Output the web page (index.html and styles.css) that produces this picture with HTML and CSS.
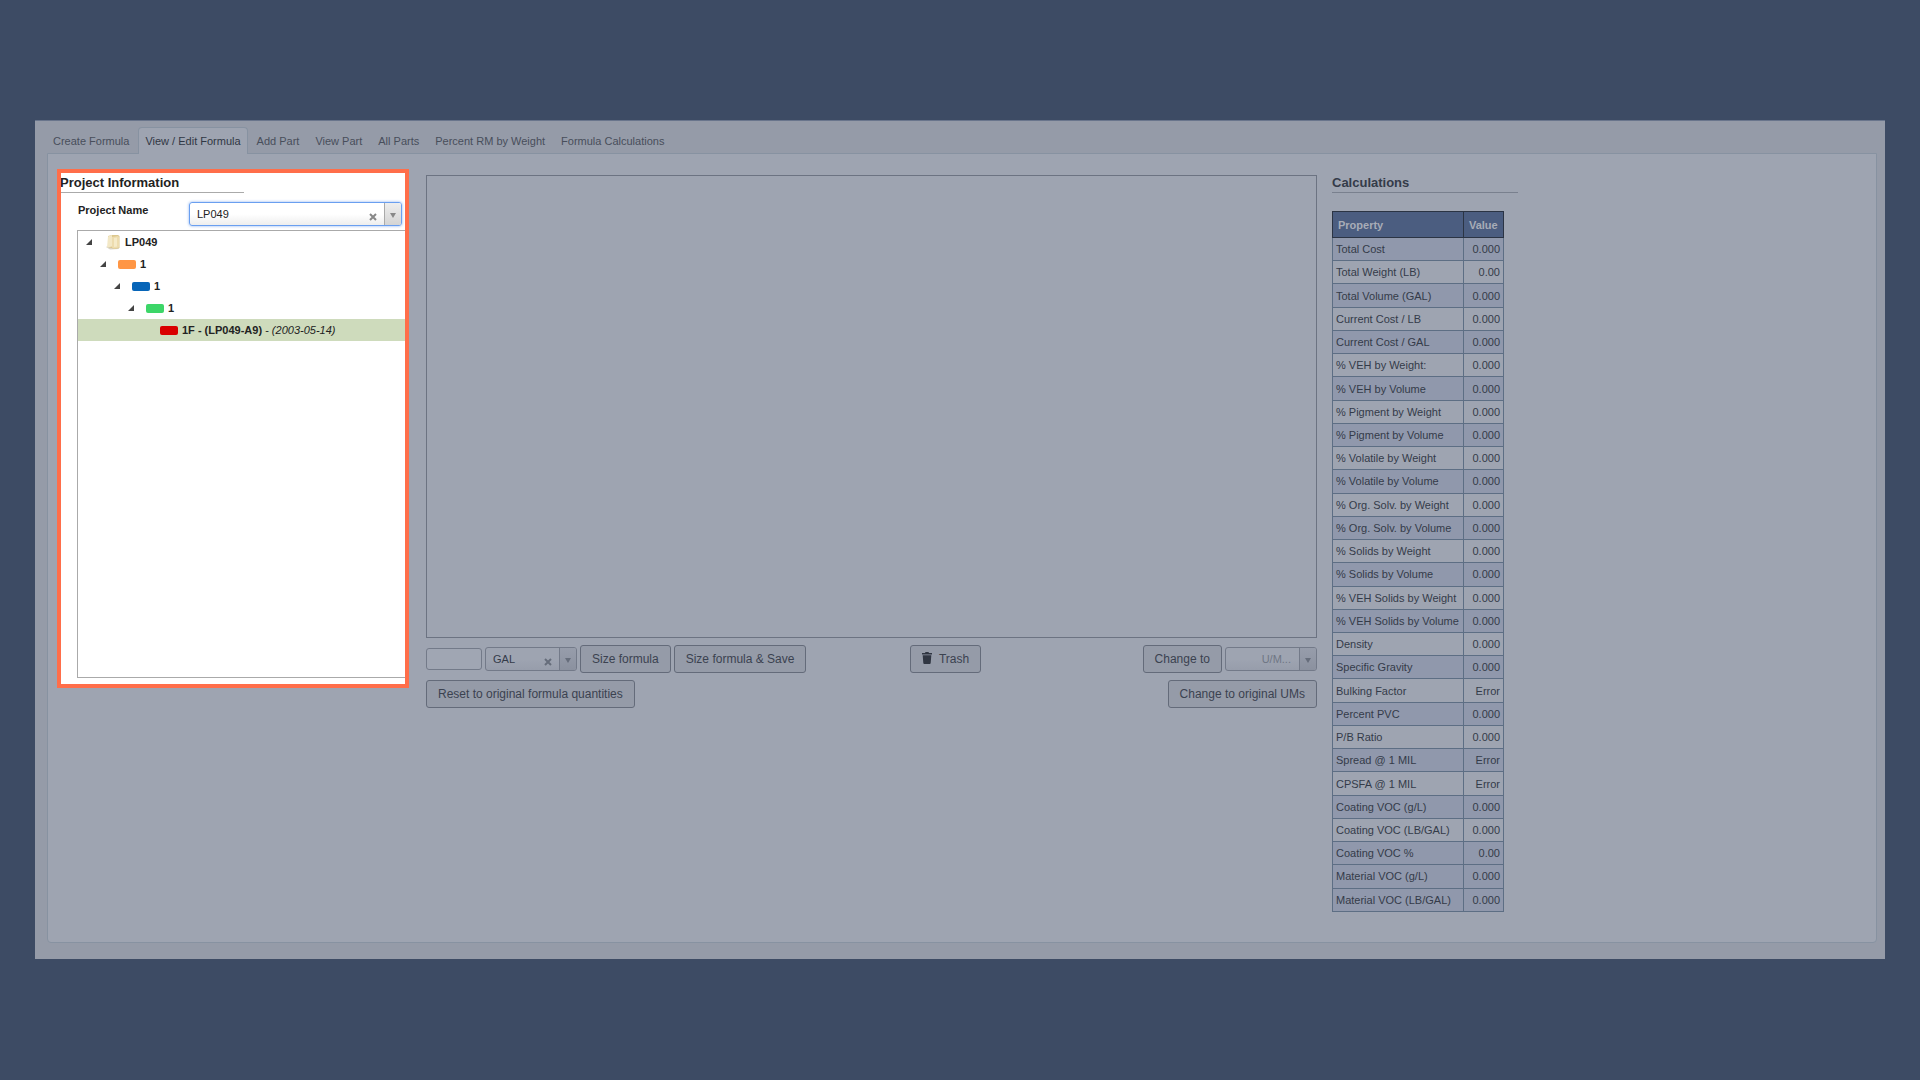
FILE: index.html
```html
<!DOCTYPE html>
<html lang="en">
<head>
    <meta charset="UTF-8">
    <meta name="viewport" content="width=device-width, initial-scale=1.0">
    <title>View / Edit Formula</title>
    <link rel="stylesheet" href="styles.css">
</head>
<body>
    <div class="window">
        <nav class="tabs">
            <a href="#create">Create Formula</a>
            <a href="#edit" class="active">View / Edit Formula</a>
            <a href="#add-part">Add Part</a>
            <a href="#view-part">View Part</a>
            <a href="#all-parts">All Parts</a>
            <a href="#percent">Percent RM by Weight</a>
            <a href="#calc">Formula Calculations</a>
        </nav>

        <main class="panel">
            <section class="project">
                <h2>Project Information</h2>
                <div class="project-row">
                    <label for="projectName">Project Name</label>
                    <div class="combo focused">
                        <select id="projectName"><option>LP049</option></select>
                        <button class="clear" aria-label="Clear project"><svg viewBox="0 0 8 8"><path d="M1 1l6 6M7 1L1 7"/></svg></button>
                        <span class="drop"></span>
                    </div>
                </div>
                <ul class="tree">
                    <li class="level-0">
                        <button class="toggle" aria-label="Collapse"></button>
                        <svg class="folder" viewBox="0 0 16 16">
                            <path d="M1 13l2-1 10 1 1 2-9 .5z" fill="#d9d4c6"/>
                            <path d="M3 2l4-1h6l1.500 1v12l-5 1L3 13z" fill="#dcc78d"/>
                            <path d="M3 2.500L7 1v11.500l-5 1z" fill="#f3e8c6"/>
                            <path d="M7 3l6-1 1 1v10.500l-5 1-2-1z" fill="#eddcae"/>
                            <path d="M9 4l3-.5v9L9 13z" fill="#f5eac8"/>
                        </svg>
                        <b>LP049</b>
                    </li>
                    <li class="level-1">
                        <button class="toggle" aria-label="Collapse"></button>
                        <span class="chip orange"></span><b>1</b>
                    </li>
                    <li class="level-2">
                        <button class="toggle" aria-label="Collapse"></button>
                        <span class="chip blue"></span><b>1</b>
                    </li>
                    <li class="level-3">
                        <button class="toggle" aria-label="Collapse"></button>
                        <span class="chip green"></span><b>1</b>
                    </li>
                    <li class="level-4 selected">
                        <span class="chip red"></span><span><b>1F - (LP049-A9)</b> - <i>(2003-05-14)</i></span>
                    </li>
                </ul>
            </section>

            <section class="formula">
                <div class="formula-grid"></div>
                <div class="toolbar">
                    <div class="group">
                        <input class="size" type="text" aria-label="Formula size">
                        <div class="combo unit">
                            <select aria-label="Size unit"><option>GAL</option></select>
                            <button class="clear" aria-label="Clear unit"><svg viewBox="0 0 8 8"><path d="M1 1l6 6M7 1L1 7"/></svg></button>
                            <span class="drop"></span>
                        </div>
                        <button class="btn">Size formula</button>
                        <button class="btn">Size formula &amp; Save</button>
                    </div>
                    <button class="btn btn-trash">
                        <svg class="trash" viewBox="0 0 10 12"><path d="M0 1h3l.5-1h3L7 1h3v1.500H0zM.7 3.300h8.600L8.700 11q-.1 1-1 1H2.300q-.9 0-1-1z"/></svg>Trash
                    </button>
                    <div class="group">
                        <button class="btn">Change to</button>
                        <div class="combo unit empty">
                            <select aria-label="Unit of measure"><option>U/M...</option></select>
                            <span class="drop"></span>
                        </div>
                    </div>
                </div>
                <div class="toolbar">
                    <button class="btn">Reset to original formula quantities</button>
                    <button class="btn">Change to original UMs</button>
                </div>
            </section>

            <section class="calculations">
                <h2>Calculations</h2>
                <table>
                    <thead>
                        <tr><th>Property</th><th>Value</th></tr>
                    </thead>
                    <tbody>
                        <tr><td>Total Cost</td><td>0.000</td></tr>
                        <tr><td>Total Weight (LB)</td><td>0.00</td></tr>
                        <tr><td>Total Volume (GAL)</td><td>0.000</td></tr>
                        <tr><td>Current Cost / LB</td><td>0.000</td></tr>
                        <tr><td>Current Cost / GAL</td><td>0.000</td></tr>
                        <tr><td>% VEH by Weight:</td><td>0.000</td></tr>
                        <tr><td>% VEH by Volume</td><td>0.000</td></tr>
                        <tr><td>% Pigment by Weight</td><td>0.000</td></tr>
                        <tr><td>% Pigment by Volume</td><td>0.000</td></tr>
                        <tr><td>% Volatile by Weight</td><td>0.000</td></tr>
                        <tr><td>% Volatile by Volume</td><td>0.000</td></tr>
                        <tr><td>% Org. Solv. by Weight</td><td>0.000</td></tr>
                        <tr><td>% Org. Solv. by Volume</td><td>0.000</td></tr>
                        <tr><td>% Solids by Weight</td><td>0.000</td></tr>
                        <tr><td>% Solids by Volume</td><td>0.000</td></tr>
                        <tr><td>% VEH Solids by Weight</td><td>0.000</td></tr>
                        <tr><td>% VEH Solids by Volume</td><td>0.000</td></tr>
                        <tr><td>Density</td><td>0.000</td></tr>
                        <tr><td>Specific Gravity</td><td>0.000</td></tr>
                        <tr><td>Bulking Factor</td><td>Error</td></tr>
                        <tr><td>Percent PVC</td><td>0.000</td></tr>
                        <tr><td>P/B Ratio</td><td>0.000</td></tr>
                        <tr><td>Spread @ 1 MIL</td><td>Error</td></tr>
                        <tr><td>CPSFA @ 1 MIL</td><td>Error</td></tr>
                        <tr><td>Coating VOC (g/L)</td><td>0.000</td></tr>
                        <tr><td>Coating VOC (LB/GAL)</td><td>0.000</td></tr>
                        <tr><td>Coating VOC %</td><td>0.00</td></tr>
                        <tr class="shaded"><td>Material VOC (g/L)</td><td>0.000</td></tr>
                        <tr><td>Material VOC (LB/GAL)</td><td>0.000</td></tr>
                    </tbody>
                </table>
            </section>
        </main>
    </div>
</body>
</html>
```
FILE: styles.css
```css
* {
    box-sizing: border-box;
}

body {
    margin: 0;
    padding: 120px 35px;
    background-color: #3d4b64;
    color: #343b49;
    font-family: "Liberation Sans", Arial, sans-serif;
    font-size: 11px;
}

button,
input,
select {
    font-family: inherit;
    color: inherit;
}

h2 {
    margin: 0;
    font-size: 13px;
    line-height: 18px;
}

.window {
    background-color: #959ba8;
    border-top: 1px solid #69758c;
    padding: 6px 8px 16px 12px;
}

/* Tabs */
.tabs {
    display: flex;
    gap: 2px;
    height: 26px;
}

.tabs a {
    padding: 0 6px;
    line-height: 26px;
    color: #484e5b;
    text-decoration: none;
    border: 1px solid transparent;
}

.tabs a:first-child {
    padding-left: 5px;
}

.tabs a.active {
    position: relative;
    height: 27px;
    color: #303744;
    background-color: #9ea4b1;
    border-color: #8792a1;
    border-bottom: 0;
    border-radius: 4px 4px 0 0;
}

.panel {
    display: flex;
    gap: 15px;
    padding: 15px 0 30px 9px;
    background-color: #9ea4b1;
    border: 1px solid #8792a1;
    border-radius: 0 0 4px 4px;
}

/* Project information */
.project {
    flex: 0 0 352px;
    align-self: flex-start;
    margin-right: 2px;
    padding-bottom: 6px;
    background-color: #fff;
    color: #222;
    border: 4px solid #ff6e4a;
    overflow: hidden;
}

.project h2 {
    width: 184px;
    margin-left: -1px;
    padding-top: 1px;
    border-bottom: 1px solid #aaa;
}

.project-row {
    display: flex;
    justify-content: space-between;
    margin: 9px 3px 4px 17px;
}

.project-row label {
    line-height: 16px;
    font-weight: bold;
}

/* Combo boxes */
.combo {
    position: relative;
    height: 24px;
    border: 1px solid #737a89;
    border-radius: 3px;
    background-image: linear-gradient(#9ea4b1 50%, #979dab);
}

.combo.focused {
    width: 213px;
    border-color: #6a9ff0;
    background-image: linear-gradient(#fff 50%, #eee);
    box-shadow: 0 0 3px #8ab0ee;
}

.combo.unit {
    width: 92px;
}

.combo select {
    width: 100%;
    height: 100%;
    padding: 0 0 0 7px;
    font-size: 11px;
    background: none;
    border: 0;
    appearance: none;
}

.combo.empty select {
    padding-right: 25px;
    color: #6f7684;
    text-align-last: right;
}

.clear {
    position: absolute;
    right: 24px;
    top: 10px;
    width: 8px;
    height: 8px;
    padding: 0;
    background: none;
    border: 0;
}

.clear svg {
    display: block;
    fill: none;
    stroke: #666d7b;
    stroke-width: 2;
}

.focused .clear svg {
    stroke: #888;
}

.drop {
    position: absolute;
    right: 0;
    top: 0;
    bottom: 0;
    width: 17px;
    background-image: linear-gradient(#979dab, #8b919f);
    border-left: 1px solid #737a89;
    border-radius: 0 2px 2px 0;
    pointer-events: none;
}

.drop::after {
    content: "";
    position: absolute;
    left: 5px;
    top: 10px;
    border: 3px solid transparent;
    border-top: 5px solid #666d7b;
    border-bottom: 0;
}

.focused .drop {
    background-image: linear-gradient(#eee, #d4d4d4);
    border-color: #aaa;
}

.focused .drop::after {
    border-top-color: #888;
}

/* Formula tree */
.tree {
    height: 448px;
    margin: 0 0 0 16px;
    padding: 0;
    list-style: none;
    border: 1px solid #aaa;
    border-right: 0;
}

.tree li {
    display: flex;
    align-items: center;
    height: 22px;
}

.tree li.selected {
    background-color: #cedbbc;
}

.toggle {
    width: 6px;
    height: 6px;
    margin-right: 12px;
    padding: 0;
    background-color: #444;
    border: 0;
    clip-path: polygon(100% 0, 100% 100%, 0 100%);
}

.folder {
    width: 16px;
    height: 16px;
    margin: 0 4px 0 1px;
}

.chip {
    width: 18px;
    height: 9px;
    margin-right: 4px;
    border-radius: 2px;
}

.orange { background-color: #ff9645; }
.blue { background-color: #0765b8; }
.green { background-color: #3cd668; }
.red { background-color: #d90000; }

.level-0 { padding-left: 8px; }
.level-1 { padding-left: 22px; }
.level-2 { padding-left: 36px; }
.level-3 { padding-left: 50px; }
.level-4 { padding-left: 82px; }

/* Formula grid and its buttons */
.formula {
    flex: 1;
    padding-top: 6px;
}

.formula-grid {
    height: 463px;
    margin-bottom: 7px;
    border: 1px solid #6c7382;
}

.toolbar {
    display: flex;
    justify-content: space-between;
    margin-bottom: 7px;
}

.group {
    display: flex;
    align-items: center;
    gap: 3px;
}

.size {
    width: 56px;
    height: 22px;
    background-color: #a0a6b3;
    border: 1px solid #737a89;
    border-radius: 3px;
}

.btn {
    height: 28px;
    padding: 0 11px;
    font-size: 12px;
    color: #3b4250;
    background-color: #959ba8;
    border: 1px solid #646b7a;
    border-radius: 3px;
}

.btn-trash {
    margin-right: 58px;
}

.trash {
    width: 10px;
    height: 12px;
    margin-right: 7px;
    vertical-align: -1px;
    fill: #303642;
}

/* Calculations */
.calculations {
    flex: 0 0 544px;
    padding-top: 5px;
}

.calculations h2 {
    width: 186px;
    margin-bottom: 18px;
    border-bottom: 1px solid #79808e;
}

table {
    width: 172px;
    height: 701px;
    border-collapse: collapse;
}

th {
    height: 26px;
    padding: 0 5px;
    color: #a7acb7;
    text-align: left;
    background-color: #4b5d80;
    border: 1px solid #2b3444;
}

td {
    padding: 0 3px;
    white-space: nowrap;
    border: 1px solid #5d6e84;
}

td:last-child {
    text-align: right;
}

tbody tr:nth-child(odd),
tbody tr.shaded {
    background-color: #9098ac;
}
```
